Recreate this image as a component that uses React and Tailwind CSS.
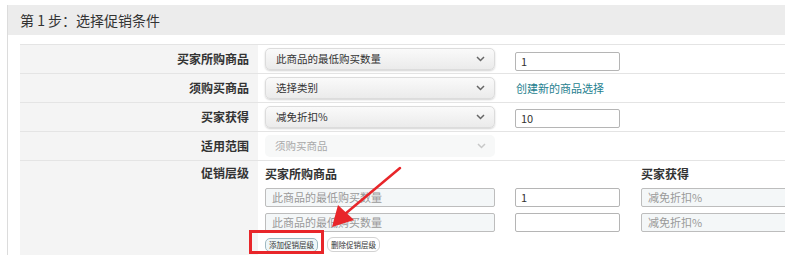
import React from "react";

const font = { fontFamily: '"Noto Sans CJK SC", "Noto Sans", sans-serif' };

function Chevron({ light }) {
  return (
    <svg width="9" height="6" viewBox="0 0 9 6" className="shrink-0">
      <path d="M1 1 L4.5 4.5 L8 1" fill="none" stroke={light ? "#c8c8c8" : "#666"} strokeWidth="1.5" />
    </svg>
  );
}

function Select({ text, disabled }) {
  return (
    <div
      className={
        "w-[230px] h-[22px] rounded-[5px] flex items-center justify-between pl-[10px] pr-[9px] text-[10.5px] " +
        (disabled
          ? "bg-[#f7f8f8] text-[#a8a8a8]"
          : "bg-gradient-to-b from-[#fafafa] to-[#ebebeb] text-[#333] border border-[#dcdcdc] shadow-[0_1px_2px_rgba(0,0,0,0.18)]")
      }
    >
      <span>{text}</span>
      <Chevron light={disabled} />
    </div>
  );
}

function Input({ value, w = "w-[105px]" }) {
  return (
    <div className={w + " h-[19px] border border-[#b5b5b5] rounded-[2px] bg-white flex items-center px-[5px] text-[11px] text-[#333]"}>
      {value}
    </div>
  );
}

function PInput({ text, w }) {
  return (
    <div className={w + " h-[19px] border border-[#bdbdbd] rounded-[2px] bg-[#f4f7f8] flex items-center px-[6px] text-[11px] text-[#9a9a9a]"}>
      {text}
    </div>
  );
}

function Row({ label, h = "h-[29px]", children, top }) {
  return (
    <div className={"flex border-b border-[#e4e4e4] " + h}>
      <div
        className={
          "w-[238px] shrink-0 bg-[#f4f4f4] flex justify-end pr-[9px] text-[12px] font-semibold text-[#333] " +
          (top ? "items-start pt-[3px]" : "items-center")
        }
      >
        {label}
      </div>
      <div className={"flex-1 pl-[7px] flex " + (top ? "items-start" : "items-center")}>{children}</div>
    </div>
  );
}

export default function App() {
  return (
    <div className="w-[785px] h-[255px] bg-white overflow-hidden relative" style={font}>
      <div className="ml-[7px] mt-[5px] border-l border-[#dcdcdc] h-[250px]">
        <div className="h-[30px] bg-[#ececec] flex items-center pl-[12px] text-[14px] text-[#333]">
          第 1 步：选择促销条件
        </div>
        <div className="pl-[12px] pt-[9px]">
          <div className="border-t border-[#e4e4e4]">
            <Row label="买家所购商品">
              <Select text="此商品的最低购买数量" />
              <div className="ml-[20px] mt-[4px]">
                <Input value="1" />
              </div>
            </Row>
            <Row label="须购买商品">
              <Select text="选择类别" />
              <span className="ml-[21px] text-[11px] text-[#1f7f8f]">创建新的商品选择</span>
            </Row>
            <Row label="买家获得">
              <Select text="减免折扣%" />
              <div className="ml-[20px] mt-[2px]">
                <Input value="10" />
              </div>
            </Row>
            <Row label="适用范围">
              <Select text="须购买商品" disabled />
            </Row>
            <Row label="促销层级" h="h-[100px]" top>
              <div className="pt-[4px] w-full">
                <div className="flex text-[12px] font-semibold text-[#333] h-[18px] items-center">
                  <span className="w-[376px]">买家所购商品</span>
                  <span>买家获得</span>
                </div>
                <div className="flex items-center mt-[5px] gap-[20px]">
                  <PInput text="此商品的最低购买数量" w="w-[230px]" />
                  <Input value="1" />
                  <PInput text="减免折扣%" w="w-[160px] ml-[1px]" />
                </div>
                <div className="flex items-center mt-[6px] gap-[20px]">
                  <PInput text="此商品的最低购买数量" w="w-[230px]" />
                  <Input value="" />
                  <PInput text="减免折扣%" w="w-[160px] ml-[1px]" />
                </div>
                <div className="flex items-center mt-[5px] gap-[9px]">
                  <button className="w-[53px] h-[14px] justify-center rounded-[5px] border border-[#9fb9c2] bg-[#eef6f8] text-[7.5px] leading-none text-[#333] flex items-center">
                    添加促销层级
                  </button>
                  <button className="w-[53px] h-[15px] justify-center rounded-[6px] border border-[#d2d2d2] bg-white text-[7.5px] leading-none text-[#333] flex items-center">
                    删除促销层级
                  </button>
                </div>
              </div>
            </Row>
          </div>
        </div>
      </div>
      {/* annotation: red box */}
      <div className="absolute left-[249px] top-[230px] w-[75px] h-[24px] border-[3px] border-[#e8262a]" />
      {/* annotation: red arrow */}
      <svg className="absolute left-0 top-0" width="785" height="255" viewBox="0 0 785 255">
        <line x1="400" y1="168" x2="345" y2="214" stroke="#e8262a" strokeWidth="2.5" strokeLinecap="round" />
        <polygon points="332,227 338,205 354,220" fill="#e8262a" />
      </svg>
    </div>
  );
}
